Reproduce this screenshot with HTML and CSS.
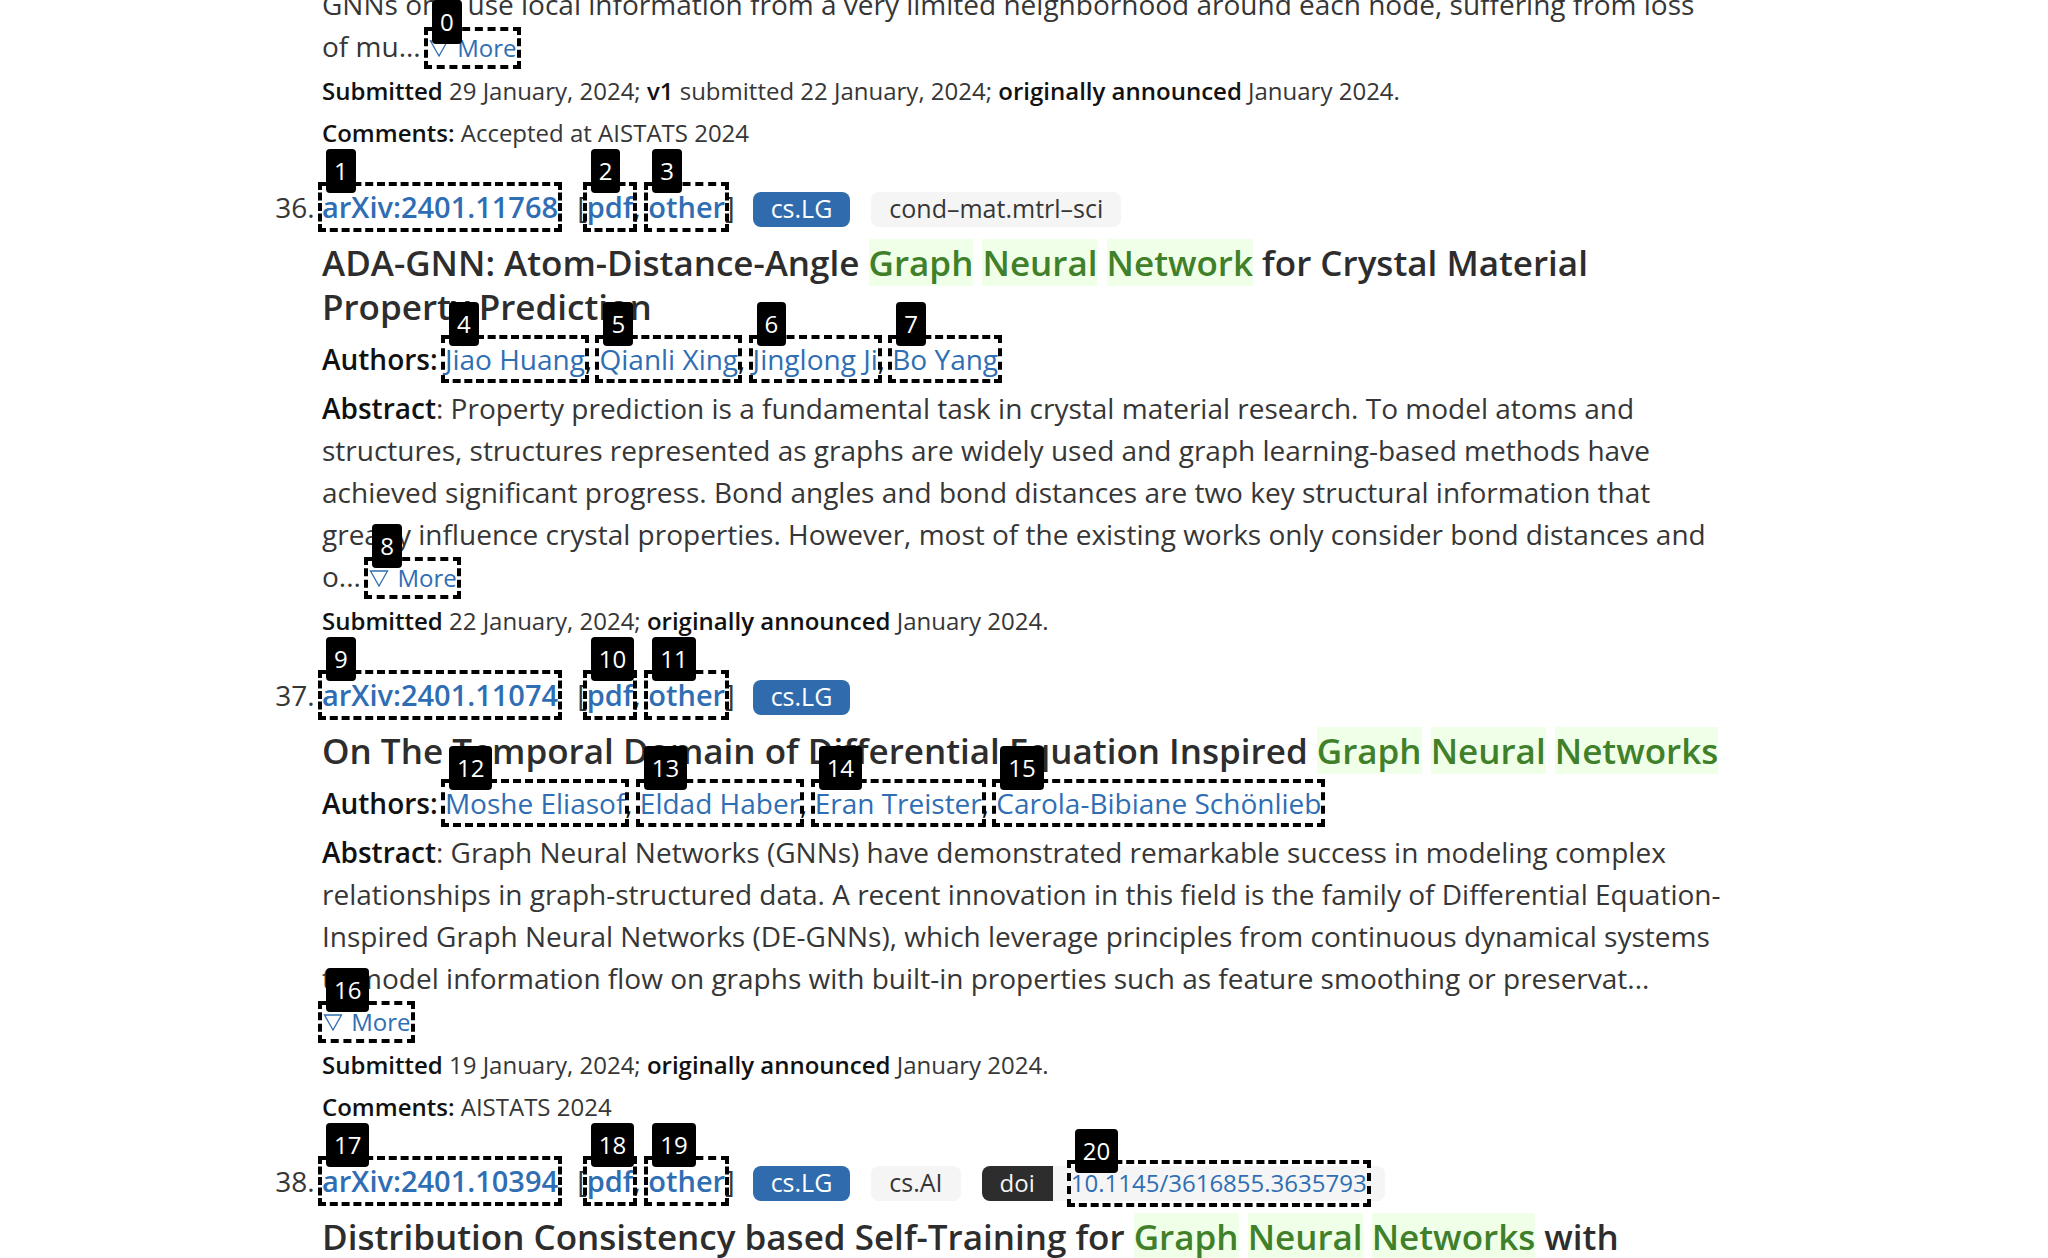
FILE: index.html
```html
<!DOCTYPE html>
<html lang="en">
<head>
<meta charset="utf-8">
<title>Search results</title>
<link rel="stylesheet" href="styles.css">
</head>
<body>
<main class="results">
<ol class="list" start="35">
  <li class="result result-open">
    <p class="abstract">GNNs only use local information from a very limited neighborhood around each node, suffering from loss of mu... <a class="hint more" href="#a35"><span class="badge">0</span><svg class="tri" viewBox="0 0 23 17" aria-hidden="true"><path d="M2.5 1H19.5L11 16Z"/></svg> More</a></p>
    <div class="meta">
      <p><b>Submitted</b> 29 January, 2024; <b>v1</b> submitted 22 January, 2024; <b>originally announced</b> January 2024.</p>
      <p><b>Comments:</b> Accepted at AISTATS 2024</p>
    </div>
  </li>
  <li class="result">
    <div class="head"><p class="ids"><a class="hint" href="#11768"><span class="badge">1</span>arXiv:2401.11768</a><span class="formats">&nbsp; [<a class="hint" href="#pdf36"><span class="badge">2</span>pdf</a>, <a class="hint" href="#other36"><span class="badge">3</span>other</a>]</span></p>
      <div class="tags"><span class="tag primary">cs.LG</span><span class="tag">cond–mat.mtrl–sci</span></div></div>
    <h2 class="title">ADA-GNN: Atom-Distance-Angle <mark>Graph</mark> <mark>Neural</mark> <mark>Network</mark> for Crystal Material Property Prediction</h2>
    <p class="authors"><b>Authors:</b> <a class="hint" href="#huang"><span class="badge">4</span>Jiao Huang</a>, <a class="hint" href="#xing"><span class="badge">5</span>Qianli Xing</a>, <a class="hint" href="#ji"><span class="badge">6</span>Jinglong Ji</a>, <a class="hint" href="#yang"><span class="badge">7</span>Bo Yang</a></p>
    <p class="abstract"><b>Abstract</b>: Property prediction is a fundamental task in crystal material research. To model atoms and structures, structures represented as graphs are widely used and graph learning-based methods have achieved significant progress. Bond angles and bond distances are two key structural information that greatly influence crystal properties. However, most of the existing works only consider bond distances and o... <a class="hint more" href="#a36"><span class="badge">8</span><svg class="tri" viewBox="0 0 23 17" aria-hidden="true"><path d="M2.5 1H19.5L11 16Z"/></svg> More</a></p>
    <div class="meta">
      <p><b>Submitted</b> 22 January, 2024; <b>originally announced</b> January 2024.</p>
    </div>
  </li>
  <li class="result">
    <div class="head"><p class="ids"><a class="hint" href="#11074"><span class="badge">9</span>arXiv:2401.11074</a><span class="formats">&nbsp; [<a class="hint" href="#pdf37"><span class="badge">10</span>pdf</a>, <a class="hint" href="#other37"><span class="badge">11</span>other</a>]</span></p>
      <div class="tags"><span class="tag primary">cs.LG</span></div></div>
    <h2 class="title">On The Temporal Domain of Differential Equation Inspired <mark>Graph</mark> <mark>Neural</mark> <mark>Networks</mark></h2>
    <p class="authors"><b>Authors:</b> <a class="hint" href="#eliasof"><span class="badge">12</span>Moshe Eliasof</a>, <a class="hint" href="#haber"><span class="badge">13</span>Eldad Haber</a>, <a class="hint" href="#treister"><span class="badge">14</span>Eran Treister</a>, <a class="hint" href="#schonlieb"><span class="badge">15</span>Carola-Bibiane Schönlieb</a></p>
    <p class="abstract"><b>Abstract</b>: Graph Neural Networks (GNNs) have demonstrated remarkable success in modeling complex relationships in graph-structured data. A recent innovation in this field is the family of Differential Equation-Inspired Graph Neural Networks (DE-GNNs), which leverage principles from continuous dynamical systems to model information flow on graphs with built-in properties such as feature smoothing or preservat... <a class="hint more" href="#a37"><span class="badge">16</span><svg class="tri" viewBox="0 0 23 17" aria-hidden="true"><path d="M2.5 1H19.5L11 16Z"/></svg> More</a></p>
    <div class="meta">
      <p><b>Submitted</b> 19 January, 2024; <b>originally announced</b> January 2024.</p>
      <p><b>Comments:</b> AISTATS 2024</p>
    </div>
  </li>
  <li class="result">
    <div class="head"><p class="ids"><a class="hint" href="#10394"><span class="badge">17</span>arXiv:2401.10394</a><span class="formats">&nbsp; [<a class="hint" href="#pdf38"><span class="badge">18</span>pdf</a>, <a class="hint" href="#other38"><span class="badge">19</span>other</a>]</span></p>
      <div class="tags"><span class="tag primary">cs.LG</span><span class="tag">cs.AI</span><span class="joined"><span class="tag dark">doi</span><span class="tag link"><a class="hint doi" href="#doi"><span class="badge">20</span>10.1145/3616855.3635793</a></span></span></div></div>
    <h2 class="title">Distribution Consistency based Self-Training for <mark>Graph</mark> <mark>Neural</mark> <mark>Networks</mark> with</h2>
  </li>
</ol>
</main>
</body>
</html>
```
FILE: styles.css
```css
* { box-sizing: border-box; }
body {
  margin: 0;
  height: 100vh;
  overflow: hidden;
  background: #fff;
  color: #363636;
  font: 28px/42px "Open Sans", "Noto Sans", sans-serif;
}
p, h2, ol { margin: 0; }
/* The list is scrolled part-way into the first visible result. */
.results { max-width: 1404px; margin: -17px auto 0; }
.list { padding: 0; }
.result { margin-bottom: 32px; }
.result-open { list-style: none; }
b { font-weight: 600; color: #111; }
a { color: #2f6eb3; text-decoration: none; }

.head { display: inline-flex; align-items: center; gap: 18px; vertical-align: top; }
.ids { font-size: 29px; white-space: nowrap; }
.ids a { font-weight: 600; }
.formats { margin-left: 4px; }
.tags { display: flex; gap: 21px; padding-top: 4px; }
.tag {
  display: inline-block;
  height: 35px;
  padding: 0 18px;
  border-radius: 8px;
  background: #f5f5f5;
  font-size: 25px;
  line-height: 33px;
}
.tag.primary { background: #306cad; color: #fff; }
.tag.dark { background: #2d2d2d; color: #f5f5f5; }
.tag.dark, .tag.link { font-size: 24px; }
.joined { display: flex; }
.joined .tag:first-child { border-radius: 8px 0 0 8px; }
.joined .tag:last-child { border-radius: 0 8px 8px 0; }

.title { margin-top: 13px; font-size: 35px; line-height: 44px; font-weight: 600; color: #2d2d2d; }
mark { background: #f0ffe8; color: #40802a; }
.authors { margin: 9px 0 7px; color: #111; }
.meta { margin-top: 3px; font-size: 24px; }

.hint { position: relative; display: inline-block; line-height: 40px; }
.hint::after {
  content: "";
  position: absolute;
  inset: -4px;
  border: 4px dashed #000;
  pointer-events: none;
}
.ids .hint { line-height: 42px; }
.more { font-size: 24px; line-height: 34px; }
.doi { line-height: 33px; }
.doi::after { top: -6px; bottom: -8px; }
.tri { width: 23px; height: 17px; fill: none; stroke: currentColor; stroke-width: 1.3; }
.badge {
  position: absolute;
  z-index: 1;
  left: 4px;
  top: -37px;
  padding: 0 8px;
  border-radius: 4px;
  background: #000;
  color: #fff;
  font-size: 24px;
  font-weight: 400;
  line-height: 44px;
}
/* The first badge is kept inside the top edge of the window. */
.result-open .badge { top: -31px; }
```
